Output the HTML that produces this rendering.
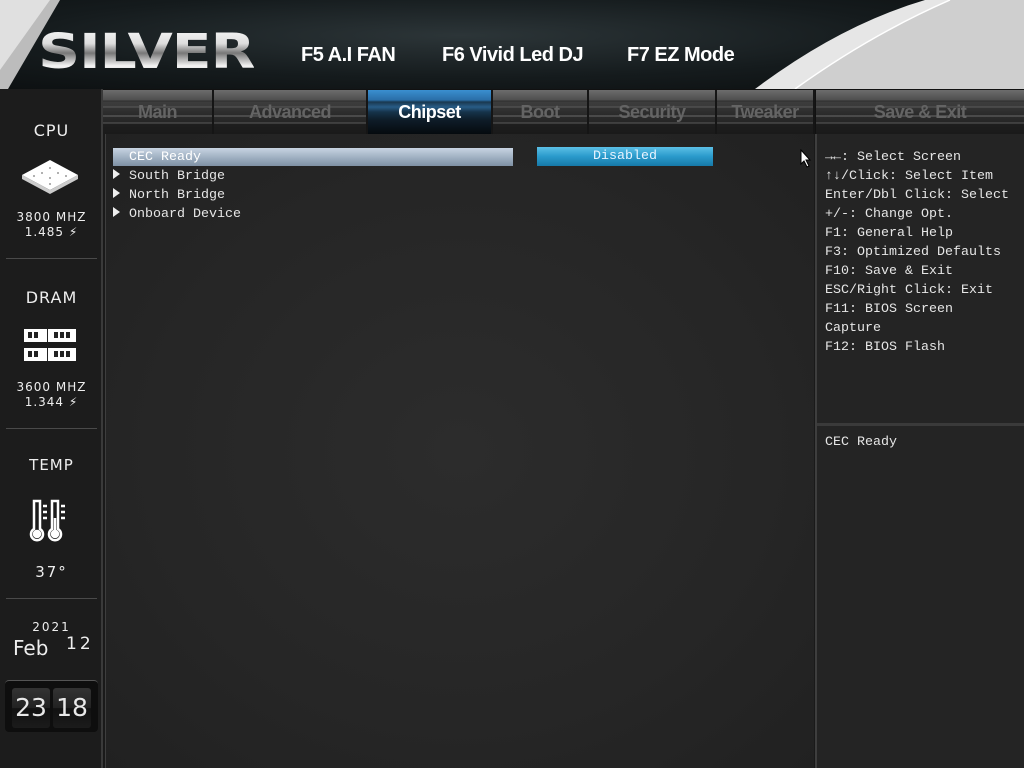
<!DOCTYPE html>
<html><head><meta charset="utf-8"><style>
*{margin:0;padding:0;box-sizing:border-box}
body{width:1024px;height:768px;overflow:hidden;background:#1a1a1a;position:relative;font-family:"Liberation Sans",sans-serif}
.abs{position:absolute}
#hdr{left:0;top:0;width:1024px;height:89px;background:radial-gradient(ellipse at 45% 40%,#2c3538 0%,#151b1d 55%,#0b0e0f 100%)}
.fk{color:#fff;font-weight:bold;font-size:20px;top:44px;letter-spacing:-0.5px}
.silver{font-family:"DejaVu Sans",sans-serif;font-weight:bold;font-size:48px;left:38px;top:24px;letter-spacing:-1px;transform:scaleX(1.22);transform-origin:left;background:linear-gradient(#fff 0%,#ddd 35%,#777 52%,#f4f4f4 75%,#aaa 100%);-webkit-background-clip:text;background-clip:text;color:transparent}
#side{left:0;top:89px;width:103px;height:679px;background:#1c1c1c;border-right:2px solid #3a3a3a}
.st{width:103px;text-align:center;color:#eee;font-family:"DejaVu Sans",sans-serif}
.hr{left:6px;width:91px;height:1px;background:#4a4a4a}
.tab{top:90px;height:44px;background:linear-gradient(#6c6c6c 0px,#4e4e4e 10px,#2e2e2e 11px,#3c3c3c 12px,#3a3a3a 16px,#5a5a5a 17px,#333 18px,#2a2a2a 25px,#6a6a6a 26px,#2a2a2a 27px,#262626 32px,#5a5a5a 33px,#1e1e1e 34px,#1a1a1a 44px);border-right:2px solid #151515;color:#646464;font-weight:bold;font-size:18px;text-align:center;line-height:44px;letter-spacing:-0.5px;font-family:"Liberation Sans",sans-serif}
.tab.act{background:linear-gradient(#3a8fd0 0px,#2a6ea8 10px,#1a3850 12px,#285c86 17px,#16334a 22px,#0e1c28 30px,#050a0e 44px);color:#fff}
#main{left:105px;top:134px;width:709px;height:634px;background:radial-gradient(ellipse at 50% 50%,#2c2c2c 0%,#262626 60%,#212121 100%);border-left:1px solid #3e3e3e}
#right{left:815px;top:134px;width:209px;height:634px;background:#242424;border-left:2px solid #3e3e3e}
.mono{font-family:"Liberation Mono","DejaVu Sans Mono",monospace;font-size:13.33px;color:#e6e6e6;line-height:19px;white-space:pre}
.tri{display:inline-block;width:0;height:0;border-left:7px solid #eee;border-top:5px solid transparent;border-bottom:5px solid transparent;margin-right:9px;vertical-align:0}
</style></head><body>
<div id="hdr" class="abs"></div>
<svg class="abs" style="left:0;top:0" width="1024" height="89">
<polygon points="0,0 60,0 8,89 0,89" fill="#bcbcbc"/>
<polygon points="0,0 60,0 50,0 0,70" fill="#e0e0e0"/>
<path d="M755,89 Q840,25 925,0 L1024,0 L1024,89 Z" fill="#e6e6e6"/>
<path d="M795,89 Q870,35 950,0 L1024,0 L1024,89 Z" fill="#cfcfcf"/>
<path d="M795,89 Q870,35 950,0" stroke="#fff" stroke-width="1.5" fill="none"/>
</svg>
<div class="abs silver">SILVER</div>
<div class="abs fk" style="left:301px">F5 A.I FAN</div>
<div class="abs fk" style="left:442px">F6 Vivid Led DJ</div>
<div class="abs fk" style="left:627px">F7 EZ Mode</div>

<div id="side" class="abs"></div>
<div class="abs st" style="top:121px;font-size:16px;letter-spacing:1px">CPU</div>
<svg class="abs" style="left:20px;top:158px" width="60" height="38"><polygon points="30,2 58,17 30,32 2,17" fill="#fff"/><polygon points="2,17 30,32 58,17 58,21 30,36 2,21" fill="#ccc"/><g fill="#999"><circle cx="30" cy="10" r="1"/><circle cx="22" cy="15" r="1"/><circle cx="38" cy="15" r="1"/><circle cx="30" cy="20" r="1"/><circle cx="30" cy="26" r="1"/><circle cx="14" cy="18" r="1"/><circle cx="46" cy="18" r="1"/></g></svg>
<div class="abs st" style="top:210px;font-size:12px;letter-spacing:1px">3800 MHZ</div>
<div class="abs st" style="top:225px;font-size:12px;letter-spacing:1px">1.485 ⚡</div>
<div class="abs hr" style="top:258px"></div>
<div class="abs st" style="top:288px;font-size:16px;letter-spacing:1px">DRAM</div>
<svg class="abs" style="left:24px;top:329px" width="52" height="34"><rect x="0" y="0" width="52" height="13" fill="#fff"/><rect x="0" y="19" width="52" height="13" fill="#fff"/><g fill="#222"><rect x="4" y="3" width="4" height="6"/><rect x="10" y="3" width="4" height="6"/><rect x="30" y="3" width="4" height="6"/><rect x="36" y="3" width="4" height="6"/><rect x="42" y="3" width="4" height="6"/><rect x="4" y="22" width="4" height="6"/><rect x="10" y="22" width="4" height="6"/><rect x="30" y="22" width="4" height="6"/><rect x="36" y="22" width="4" height="6"/><rect x="42" y="22" width="4" height="6"/><rect x="23" y="0" width="1" height="13"/><rect x="23" y="19" width="1" height="13"/></g></svg>
<div class="abs st" style="top:380px;font-size:12px;letter-spacing:1px">3600 MHZ</div>
<div class="abs st" style="top:395px;font-size:12px;letter-spacing:1px">1.344 ⚡</div>
<div class="abs hr" style="top:428px"></div>
<div class="abs st" style="top:456px;font-size:15px;letter-spacing:1px">TEMP</div>
<svg class="abs" style="left:28px;top:498px" width="48" height="46" fill="none" stroke="#fff" stroke-width="2.5"><path d="M6,3 h6 v28 a6,6 0 1 1 -6,0 z"/><path d="M24,3 h6 v28 a6,6 0 1 1 -6,0 z"/><path d="M15,8h4M15,14h4M15,20h4M33,8h4M33,14h4M33,20h4"/><circle cx="9" cy="36" r="3" fill="#fff"/><circle cx="27" cy="36" r="3" fill="#fff"/><path d="M27,20v14"/></svg>
<div class="abs st" style="top:563px;font-size:15px;letter-spacing:2px">37°</div>
<div class="abs hr" style="top:598px"></div>
<div class="abs st" style="top:620px;font-size:12px;letter-spacing:2px">2021</div>
<div class="abs" style="left:13px;top:636px;color:#eee;font-size:20px;font-family:'DejaVu Sans',sans-serif">Feb</div>
<div class="abs" style="left:66px;top:634px;color:#eee;font-size:17px;letter-spacing:3px;font-family:'DejaVu Sans',sans-serif">12</div>
<div class="abs" style="left:5px;top:680px;width:93px;height:52px;background:#0e0e0e;border-radius:4px;border-top:1px solid #555"></div>
<div class="abs" style="left:12px;top:688px;width:38px;height:40px;background:linear-gradient(#333 0,#222 50%,#111 51%,#1b1b1b 100%);border-radius:3px;color:#e8e8e8;font-size:25px;text-align:center;line-height:40px;font-family:'DejaVu Sans',sans-serif">23</div>
<div class="abs" style="left:53px;top:688px;width:38px;height:40px;background:linear-gradient(#333 0,#222 50%,#111 51%,#1b1b1b 100%);border-radius:3px;color:#e8e8e8;font-size:25px;text-align:center;line-height:40px;font-family:'DejaVu Sans',sans-serif">18</div>

<div class="abs" style="left:103px;top:89px;width:921px;height:45px;background:#111"></div>
<div class="abs tab" style="left:103px;width:111px">Main</div>
<div class="abs tab" style="left:214px;width:154px">Advanced</div>
<div class="abs tab act" style="left:368px;width:125px">Chipset</div>
<div class="abs tab" style="left:493px;width:96px">Boot</div>
<div class="abs tab" style="left:589px;width:128px">Security</div>
<div class="abs tab" style="left:717px;width:98px">Tweaker</div>
<div class="abs tab" style="left:816px;width:208px;border-right:0">Save &amp; Exit</div>

<div id="main" class="abs"></div>
<div id="right" class="abs"></div>
<div class="abs" style="left:817px;top:423px;width:207px;height:3px;background:#3a3a3a"></div>

<div class="abs" style="left:113px;top:148px;width:400px;height:18px;background:linear-gradient(#c8d4e2,#9aabbd 60%,#7f91a4)"></div>
<div class="abs mono" style="left:129px;top:148px;line-height:19px;color:#fff">CEC Ready</div>
<div class="abs mono" style="left:113px;top:167px"><span class="tri"></span>South Bridge
<span class="tri"></span>North Bridge
<span class="tri"></span>Onboard Device</div>
<div class="abs mono" style="left:537px;top:147px;width:176px;height:19px;background:linear-gradient(#5cc0e6,#2a9acb 50%,#1679a8);text-align:center;color:#e8f4ff;line-height:20px">Disabled</div>
<svg class="abs" style="left:800px;top:149px" width="12" height="19"><path d="M1,1 L1,15 L4,12 L7,18 L9,17 L6,11 L10,11 Z" fill="#fff" stroke="#000" stroke-width="1"/></svg>

<div class="abs mono" style="left:825px;top:148px">→←: Select Screen
↑↓/Click: Select Item
Enter/Dbl Click: Select
+/-: Change Opt.
F1: General Help
F3: Optimized Defaults
F10: Save &amp; Exit
ESC/Right Click: Exit
F11: BIOS Screen
Capture
F12: BIOS Flash</div>
<div class="abs mono" style="left:825px;top:433px">CEC Ready</div>
</body></html>
